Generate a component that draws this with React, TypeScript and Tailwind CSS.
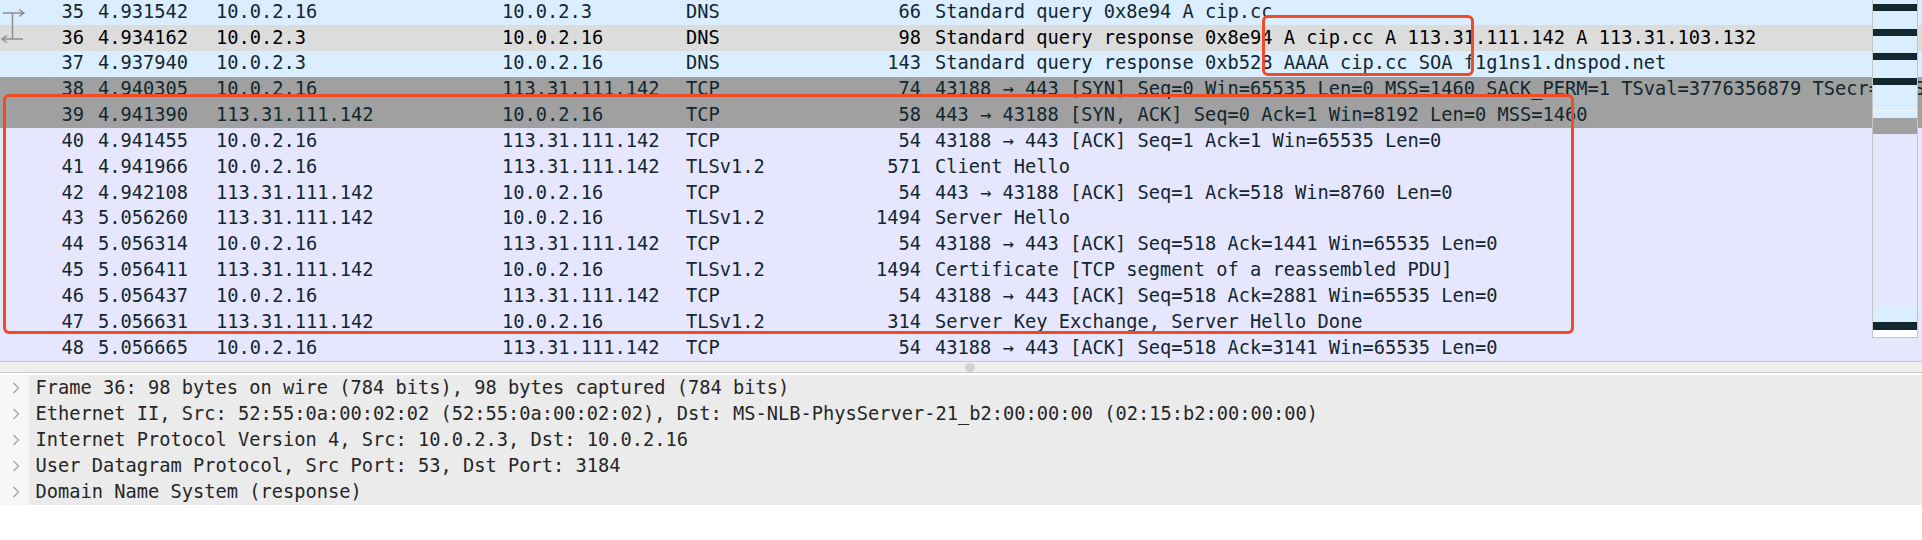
import React from "react";

type Row = {
  no: string;
  time: string;
  src: string;
  dst: string;
  proto: string;
  len: string;
  info: string;
  kind: "blue" | "sel" | "syn" | "tcp";
};

const rows: Row[] = [
  { no: "35", time: "4.931542", src: "10.0.2.16", dst: "10.0.2.3", proto: "DNS", len: "66", info: "Standard query 0x8e94 A cip.cc", kind: "blue" },
  { no: "36", time: "4.934162", src: "10.0.2.3", dst: "10.0.2.16", proto: "DNS", len: "98", info: "Standard query response 0x8e94 A cip.cc A 113.31.111.142 A 113.31.103.132", kind: "sel" },
  { no: "37", time: "4.937940", src: "10.0.2.3", dst: "10.0.2.16", proto: "DNS", len: "143", info: "Standard query response 0xb528 AAAA cip.cc SOA f1g1ns1.dnspod.net", kind: "blue" },
  { no: "38", time: "4.940305", src: "10.0.2.16", dst: "113.31.111.142", proto: "TCP", len: "74", info: "43188 → 443 [SYN] Seq=0 Win=65535 Len=0 MSS=1460 SACK_PERM=1 TSval=3776356879 TSecr=0 WS=64", kind: "syn" },
  { no: "39", time: "4.941390", src: "113.31.111.142", dst: "10.0.2.16", proto: "TCP", len: "58", info: "443 → 43188 [SYN, ACK] Seq=0 Ack=1 Win=8192 Len=0 MSS=1460", kind: "syn" },
  { no: "40", time: "4.941455", src: "10.0.2.16", dst: "113.31.111.142", proto: "TCP", len: "54", info: "43188 → 443 [ACK] Seq=1 Ack=1 Win=65535 Len=0", kind: "tcp" },
  { no: "41", time: "4.941966", src: "10.0.2.16", dst: "113.31.111.142", proto: "TLSv1.2", len: "571", info: "Client Hello", kind: "tcp" },
  { no: "42", time: "4.942108", src: "113.31.111.142", dst: "10.0.2.16", proto: "TCP", len: "54", info: "443 → 43188 [ACK] Seq=1 Ack=518 Win=8760 Len=0", kind: "tcp" },
  { no: "43", time: "5.056260", src: "113.31.111.142", dst: "10.0.2.16", proto: "TLSv1.2", len: "1494", info: "Server Hello", kind: "tcp" },
  { no: "44", time: "5.056314", src: "10.0.2.16", dst: "113.31.111.142", proto: "TCP", len: "54", info: "43188 → 443 [ACK] Seq=518 Ack=1441 Win=65535 Len=0", kind: "tcp" },
  { no: "45", time: "5.056411", src: "113.31.111.142", dst: "10.0.2.16", proto: "TLSv1.2", len: "1494", info: "Certificate [TCP segment of a reassembled PDU]", kind: "tcp" },
  { no: "46", time: "5.056437", src: "10.0.2.16", dst: "113.31.111.142", proto: "TCP", len: "54", info: "43188 → 443 [ACK] Seq=518 Ack=2881 Win=65535 Len=0", kind: "tcp" },
  { no: "47", time: "5.056631", src: "113.31.111.142", dst: "10.0.2.16", proto: "TLSv1.2", len: "314", info: "Server Key Exchange, Server Hello Done", kind: "tcp" },
  { no: "48", time: "5.056665", src: "10.0.2.16", dst: "113.31.111.142", proto: "TCP", len: "54", info: "43188 → 443 [ACK] Seq=518 Ack=3141 Win=65535 Len=0", kind: "tcp" },
];

const kindClass: Record<Row["kind"], string> = {
  blue: "bg-[#daeeff] text-[#12272e]",
  sel: "bg-[#dcdcdc] text-[#000000]",
  syn: "bg-[#a0a0a0] text-[#12272e]",
  tcp: "bg-[#e7e6ff] text-[#12272e]",
};

const details = [
  "Frame 36: 98 bytes on wire (784 bits), 98 bytes captured (784 bits)",
  "Ethernet II, Src: 52:55:0a:00:02:02 (52:55:0a:00:02:02), Dst: MS-NLB-PhysServer-21_b2:00:00:00 (02:15:b2:00:00:00)",
  "Internet Protocol Version 4, Src: 10.0.2.3, Dst: 10.0.2.16",
  "User Datagram Protocol, Src Port: 53, Dst Port: 3184",
  "Domain Name System (response)",
];

const mono = { fontFamily: '"DejaVu Sans Mono", "Liberation Mono", monospace' };

function Minimap() {
  return (
    <div className="absolute left-[1872px] top-0 w-[46px] h-[338px] border-l border-r border-b border-[#c4c4c4] flex flex-col overflow-hidden">
      <div className="h-[4px] bg-[#daeeff]" />
      <div className="h-[7px] bg-[#12272e]" />
      <div className="h-[18px] bg-[#daeeff]" />
      <div className="h-[7px] bg-[#12272e]" />
      <div className="h-[17px] bg-[#daeeff]" />
      <div className="h-[7px] bg-[#12272e]" />
      <div className="h-[18px] bg-[#daeeff]" />
      <div className="h-[7px] bg-[#12272e]" />
      <div className="h-[25px] bg-[#daeeff]" />
      <div className="h-[1px] bg-[#eef7ff]" />
      <div className="h-[7px] bg-[#daeeff]" />
      <div className="h-[16px] bg-[#a0a0a0]" />
      <div className="h-[172px] bg-[#e7e6ff]" />
      <div className="h-[16px] bg-[#daeeff]" />
      <div className="h-[8px] bg-[#12272e]" />
      <div className="flex-1 bg-white" />
    </div>
  );
}

function RelatedArrow() {
  return (
    <svg className="absolute left-0 top-0" width="28" height="50" viewBox="0 0 28 50" fill="none" stroke="#8e8e8e" strokeWidth="1.5">
      <path d="M3 13 H24 M19 9.5 L24 13 L19 16.5" />
      <path d="M12.5 13 V39" />
      <path d="M2 39 H23 M7 35.5 L2 39 L7 42.5" />
    </svg>
  );
}

export default function App() {
  return (
    <div className="w-[1922px] h-[540px] overflow-hidden bg-white relative" style={mono}>
      {/* Packet list */}
      <div className="relative h-[362px] overflow-hidden border-b border-[#c8c8c8] bg-[#e7e6ff]">
        <div className="-mt-[0.9px] flex flex-col">
          {rows.map((r) => (
            <div
              key={r.no}
              className={`flex items-center h-[25.85px] whitespace-nowrap overflow-hidden text-[18.7px] leading-none ${kindClass[r.kind]}`}
            >
              <span className="w-[84px] shrink-0 text-right">{r.no}</span>
              <span className="w-[118px] shrink-0 ml-[14px]">{r.time}</span>
              <span className="w-[286px] shrink-0">{r.src}</span>
              <span className="w-[184px] shrink-0">{r.dst}</span>
              <span className="w-[160px] shrink-0">{r.proto}</span>
              <span className="w-[75px] shrink-0 text-right">{r.len}</span>
              <span className="ml-[14px] shrink-0">{r.info}</span>
            </div>
          ))}
        </div>
        <RelatedArrow />
        <Minimap />
        <div className="absolute left-[1262px] top-[15px] w-[212px] h-[61px] border-[3px] border-[#ef4b26] rounded-[6px]" />
        <div className="absolute left-[3px] top-[94px] w-[1571px] h-[240px] border-[3px] border-[#ef4b26] rounded-[6px]" />
      </div>

      {/* Splitter */}
      <div className="h-[11px] bg-[#efefef] border-b border-[#c8c8c8] flex items-center pl-[965px]">
        <div className="w-[10px] h-[9px] rounded-full bg-[#d2d2d2]" />
      </div>

      {/* Detail tree */}
      <div className="pt-[2px] flex flex-col">
        {details.map((d) => (
          <div key={d} className="flex h-[26px]">
            <div className="w-[29px] shrink-0 bg-[#f7f7f7] flex items-center justify-end pr-[9px]">
              <svg width="8" height="12" viewBox="0 0 8 12" fill="none" stroke="#a8a8a8" strokeWidth="1.4">
                <path d="M1.5 1 L6.5 6 L1.5 11" />
              </svg>
            </div>
            <div className="flex-1 bg-[#ebebeb] flex items-center pl-[6.5px] text-[18.7px] leading-none text-[#262626] whitespace-nowrap overflow-hidden">
              {d}
            </div>
          </div>
        ))}
      </div>
    </div>
  );
}
